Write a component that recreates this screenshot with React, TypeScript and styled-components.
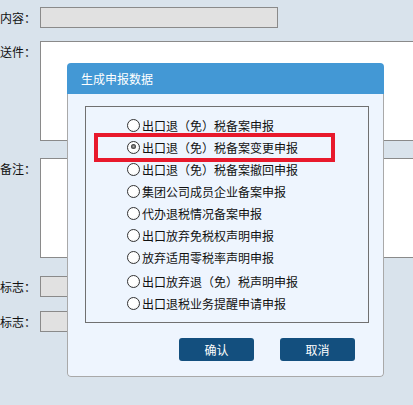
import React from "react";
import styled, { createGlobalStyle } from "styled-components";

const GlobalStyle = createGlobalStyle`
  html, body {
    margin: 0;
    padding: 0;
    background: #d9e3ec;
    overflow: hidden;
  }
  body {
    font-family: "Noto Sans CJK SC", "Noto Sans", sans-serif;
    font-size: 12px;
    color: #111;
  }
`;

const Page = styled.div`
  position: relative;
  width: 413px;
  height: 405px;
  padding-top: 7px;
  box-sizing: border-box;
  overflow: hidden;
`;

const Row = styled.div<{ $mt?: number }>`
  display: flex;
  align-items: flex-start;
  margin-top: ${(p) => p.$mt || 0}px;
`;

const Label = styled.div`
  width: 40px;
  flex: none;
  height: 21px;
  line-height: 21px;
  white-space: nowrap;
`;

const Input = styled.div`
  width: 238px;
  height: 21px;
  box-sizing: border-box;
  border: 1px solid #8a8a8a;
  background: #e1e1e1;
`;

// runs past the right edge of the window, as in the picture
const TextArea = styled.div`
  flex: 1;
  min-width: 0;
  height: 100px;
  margin-right: -4px;
  box-sizing: border-box;
  border: 1px solid #8a8a8a;
  background: #fff;
`;

const Dialog = styled.div`
  position: absolute;
  left: 67px;
  top: 63px;
  width: 317px;
  height: 314px;
  display: flex;
  flex-direction: column;
  border-radius: 4px;
  overflow: hidden;
`;

const Header = styled.div`
  height: 31px;
  flex: none;
  background: #4398d5;
  color: #fff;
  font-size: 12px;
  line-height: 31px;
  padding-left: 14px;
`;

const Body = styled.div`
  flex: 1;
  background: #eef5fe;
  border: 1px solid #a9a9a9;
  border-top: none;
  border-radius: 0 0 4px 4px;
  padding: 12px 14px 0 17px;
`;

const Fieldset = styled.div`
  position: relative;
  height: 217px;
  box-sizing: border-box;
  border: 1px solid #707070;
  padding: 7px 0 0 41px;
`;

const Option = styled.div<{ $mt?: number }>`
  display: flex;
  align-items: center;
  height: 22px;
  margin-top: ${(p) => p.$mt || 0}px;
  white-space: nowrap;
`;

const Radio = styled.span<{ $checked?: boolean }>`
  position: relative;
  width: 13px;
  height: 13px;
  flex: none;
  margin-right: 2px;
  box-sizing: border-box;
  border: 1.5px solid #333;
  border-radius: 50%;
  background: radial-gradient(circle at 40% 40%, #fff 50%, #e6e6e6 100%);

  &::after {
    content: "";
    display: ${(p) => (p.$checked ? "block" : "none")};
    position: absolute;
    left: 2.5px;
    top: 2.5px;
    width: 5px;
    height: 5px;
    border-radius: 50%;
    background: radial-gradient(circle, #aaa 0%, #333 70%);
  }
`;

const Highlight = styled.div`
  position: absolute;
  left: 8px;
  top: 26px;
  width: 241px;
  height: 29px;
  box-sizing: border-box;
  border: 4px solid #e8192c;
  pointer-events: none;
`;

const Buttons = styled.div`
  display: flex;
  justify-content: flex-end;
  gap: 26px;
  padding-right: 14px;
  margin-top: 15px;
`;

const Button = styled.button`
  width: 75px;
  height: 23px;
  border: none;
  border-radius: 3px;
  background: #134f7e;
  color: #fff;
  font-family: inherit;
  font-size: 12px;
  padding: 0;
  cursor: pointer;
`;

const options = [
  "出口退（免）税备案申报",
  "出口退（免）税备案变更申报",
  "出口退（免）税备案撤回申报",
  "集团公司成员企业备案申报",
  "代办退税情况备案申报",
  "出口放弃免税权声明申报",
  "放弃适用零税率声明申报",
  "出口放弃退（免）税声明申报",
  "出口退税业务提醒申请申报",
];

export default function App() {
  return (
    <>
      <GlobalStyle />
      <Page>
        <Row>
          <Label>内容：</Label>
          <Input />
        </Row>
        <Row $mt={13}>
          <Label>送件：</Label>
          <TextArea />
        </Row>
        <Row $mt={17}>
          <Label>备注：</Label>
          <TextArea />
        </Row>
        <Row $mt={18}>
          <Label>标志：</Label>
          <Input />
        </Row>
        <Row $mt={14}>
          <Label>标志：</Label>
          <Input />
        </Row>

        <Dialog>
          <Header>生成申报数据</Header>
          <Body>
            <Fieldset>
              {options.map((o, i) => (
                <Option key={o} $mt={i === 7 ? 2 : 0}>
                  <Radio $checked={i === 1} />
                  {o}
                </Option>
              ))}
              <Highlight />
            </Fieldset>
            <Buttons>
              <Button>确认</Button>
              <Button>取消</Button>
            </Buttons>
          </Body>
        </Dialog>
      </Page>
    </>
  );
}
